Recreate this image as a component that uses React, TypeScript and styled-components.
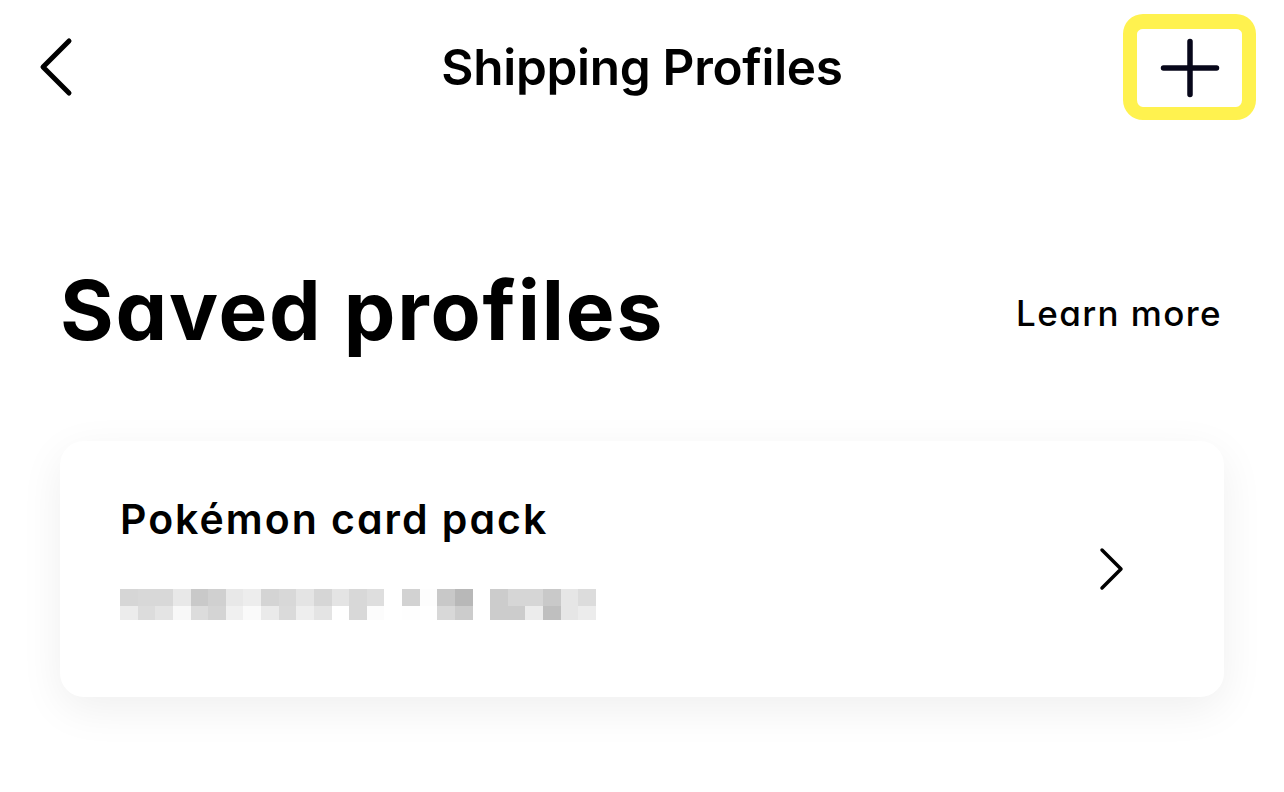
import React from "react";
import styled, { createGlobalStyle } from "styled-components";

const Global = createGlobalStyle`
  html, body { margin: 0; padding: 0; background: #ffffff; }
  body { font-family: "Inter", "Liberation Sans", sans-serif; color: #000; }
  * { box-sizing: border-box; }
`;

const Page = styled.div`
  width: 1284px;
  height: 792px;
  background: #ffffff;
  overflow: hidden;
  display: flex;
  flex-direction: column;
`;

const Header = styled.header`
  height: 134px;
  display: grid;
  grid-template-columns: 1fr auto 1fr;
  align-items: center;
  padding: 0 28px;
`;

const IconButton = styled.button`
  background: none;
  border: none;
  padding: 0;
  margin: 0;
  display: flex;
  align-items: center;
  justify-content: center;
  cursor: pointer;
`;

const BackButton = styled(IconButton)`
  justify-self: start;
  margin-left: 10px;
  width: 40px;
  height: 60px;
`;

const AddButton = styled(IconButton)`
  justify-self: end;
  width: 133px;
  height: 106px;
  border: 14px solid #fff24f;
  border-top-width: 15px;
  border-bottom-width: 13px;
  border-radius: 20px;
  background: #ffffff;
`;

const Title = styled.h1`
  margin: 0;
  font-size: 49.5px;
  font-weight: 600;
  letter-spacing: -0.3px;
  line-height: 1;
  padding-top: 2px;
`;

const SectionHead = styled.div`
  margin-top: 136px;
  padding: 0 62px 0 60px;
  display: flex;
  align-items: center;
  justify-content: space-between;
  height: 82px;
`;

const Heading = styled.h2`
  margin: 0;
  font-size: 82px;
  font-weight: 700;
  line-height: 1;
  letter-spacing: 1.8px;
  font-feature-settings: "cv11";
`;

const LearnMore = styled.a`
  font-size: 35px;
  font-weight: 500;
  line-height: 1;
  color: #000;
  text-decoration: none;
  letter-spacing: 1.4px;
  margin-top: 4px;
  font-feature-settings: "cv11";
`;

const Card = styled.div`
  margin: 89px 60px 0;
  height: 256px;
  background: #ffffff;
  border-radius: 24px;
  box-shadow: 0 12px 44px rgba(0, 0, 0, 0.065);
  display: flex;
  align-items: center;
  justify-content: space-between;
  padding: 0 99px 0 60px;
`;

const CardBody = styled.div`
  display: flex;
  flex-direction: column;
  padding: 58px 0 77px;
`;

const CardTitle = styled.div`
  font-size: 41px;
  font-weight: 600;
  line-height: 1;
  letter-spacing: 2px;
  font-feature-settings: "cv11";
`;

const Pixelated = styled.div`
  margin-top: 49px;
  display: grid;
  grid-template-columns: repeat(27, 17.63px);
  grid-template-rows: 17px 14px;
`;

const Pixel = styled.span<{ $c: string }>`
  background: ${(p) => p.$c};
`;

const row1 = [
  "#d6d6d6", "#d8d8d8", "#d8d8d8", "#e8e8e8", "#c9c9c9", "#d0d0d0", "#e8e8e8", "#ededed", "#d4d4d4", "#d8d8d8", "#e4e4e4", "#d6d6d6", "#e4e4e4", "#d8d8d8", "#dedede",
  "#ffffff",
  "#d2d2d2", "#fdfdfd", "#c8c8c8", "#b8b8b8",
  "#ffffff",
  "#cccccc", "#d6d6d6", "#d6d6d6", "#c9c9c9", "#e6e6e6", "#dcdcdc",
];
const row2 = [
  "#ececec", "#dcdcdc", "#e4e4e4", "#f8f8f8", "#dcdcdc", "#d4d4d4", "#f0f0f0", "#fafafa", "#eaeaea", "#dadada", "#eeeeee", "#e4e4e4", "#ffffff", "#d8d8d8", "#fcfcfc",
  "#ffffff",
  "#fefefe", "#ffffff", "#d8d8d8", "#cccccc",
  "#ffffff",
  "#cccccc", "#cccccc", "#ececec", "#bfbfbf", "#e6e6e6", "#ececec",
];

export default function App() {
  return (
    <Page>
      <Global />
      <Header>
        <BackButton aria-label="Back">
          <svg width="40" height="60" viewBox="0 0 40 60" fill="none">
            <path d="M31 4 L5 30 L31 56" stroke="#000" strokeWidth="5" strokeLinecap="round" strokeLinejoin="round" />
          </svg>
        </BackButton>
        <Title>Shipping Profiles</Title>
        <AddButton aria-label="Add profile">
          <svg width="60" height="60" viewBox="0 0 60 60" fill="none">
            <path d="M30 3.5 V56.5 M3.5 30 H56.5" stroke="#07071a" strokeWidth="5.5" strokeLinecap="round" />
          </svg>
        </AddButton>
      </Header>

      <SectionHead>
        <Heading>Saved profiles</Heading>
        <LearnMore href="#">Learn more</LearnMore>
      </SectionHead>

      <Card>
        <CardBody>
          <CardTitle>Pokémon card pack</CardTitle>
          <Pixelated aria-hidden>
            {row1.map((c, i) => (
              <Pixel key={"a" + i} $c={c} />
            ))}
            {row2.map((c, i) => (
              <Pixel key={"b" + i} $c={c} />
            ))}
          </Pixelated>
        </CardBody>
        <svg width="26" height="44" viewBox="0 0 26 44" fill="none">
          <path d="M3 3 L22 22 L3 41" stroke="#000" strokeWidth="3.5" strokeLinecap="round" strokeLinejoin="round" />
        </svg>
      </Card>
    </Page>
  );
}
